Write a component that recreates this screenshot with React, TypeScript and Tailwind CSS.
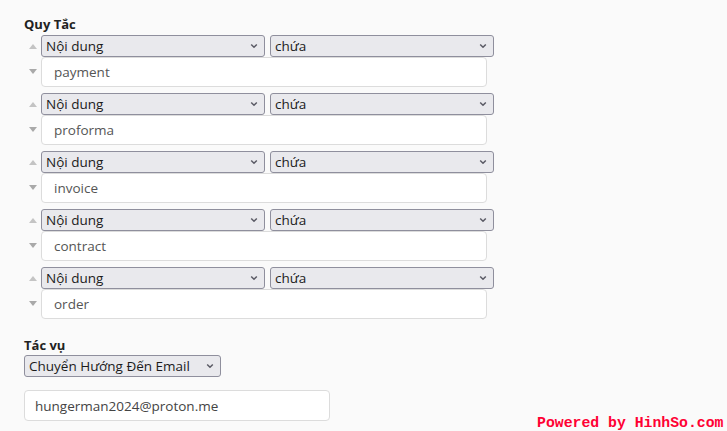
import React from "react";

const Chevron = () => (
  <svg
    className="pointer-events-none absolute right-[7px] top-1/2 -translate-y-1/2"
    width="8"
    height="5"
    viewBox="0 0 8 5"
  >
    <path d="M1.2 1 L4 3.8 L6.8 1" fill="none" stroke="#5b5b66" strokeWidth="1.5" />
  </svg>
);

function Sel({ value, w }: { value: string; w: string }) {
  return (
    <div className={`relative ${w}`}>
      <select
        defaultValue={value}
        className="block h-[22px] w-full appearance-none rounded-[3px] border border-[#8f8f9d] bg-[#e9e9ed] pl-[4px] text-[13.5px] leading-[20px] text-[#1b1b1b] outline-none"
      >
        <option>{value}</option>
      </select>
      <Chevron />
    </div>
  );
}

const rules = ["payment", "proforma", "invoice", "contract", "order"];

export default function App() {
  return (
    <div
      className="relative h-[431px] w-[727px] overflow-hidden bg-[#fafafa] pl-[24px] pt-[15px]"
      style={{ fontFamily: '"Open Sans", "Noto Sans", sans-serif' }}
    >
      <div className="text-[13px] font-bold leading-[18px] text-[#222]">Quy Tắc</div>
      <div className="mt-[2px] flex flex-col gap-[6px]">
        {rules.map((r) => (
          <div key={r} className="flex">
            <div className="flex w-[17px] flex-col items-center pt-[9px]">
              <svg width="8" height="5" viewBox="0 0 8 5">
                <path d="M0 5 L4 0 L8 5 Z" fill="#c4c4c4" />
              </svg>
              <svg className="mt-[20px]" width="8" height="5" viewBox="0 0 8 5">
                <path d="M0 0 L4 5 L8 0 Z" fill="#a9a9a9" />
              </svg>
            </div>
            <div className="flex flex-col">
              <div className="flex gap-[5px]">
                <Sel value="Nội dung" w="w-[224px]" />
                <Sel value="chứa" w="w-[224px]" />
              </div>
              <input
                readOnly
                value={r}
                className="block h-[30px] w-[446px] rounded-[4px] border border-[#dcdcdc] bg-white pl-[12px] text-[13.5px] text-[#555] outline-none"
              />
            </div>
          </div>
        ))}
      </div>
      <div className="mt-[17px] text-[13px] font-bold leading-[18px] text-[#222]">Tác vụ</div>
      <div className="mt-[1px]">
        <Sel value="Chuyển Hướng Đến Email" w="w-[197px]" />
      </div>
      <input
        readOnly
        value="hungerman2024@proton.me"
        className="mt-[13px] block h-[31px] w-[306px] rounded-[4px] border border-[#dcdcdc] bg-white pl-[10px] text-[13.5px] text-[#444] outline-none"
      />
      <div
        className="absolute bottom-0 left-[537px] text-[14.8px] font-bold leading-[15px] text-[#ff0033]"
        style={{ fontFamily: '"Liberation Mono", monospace' }}
      >
        Powered by HinhSo.com
      </div>
    </div>
  );
}
